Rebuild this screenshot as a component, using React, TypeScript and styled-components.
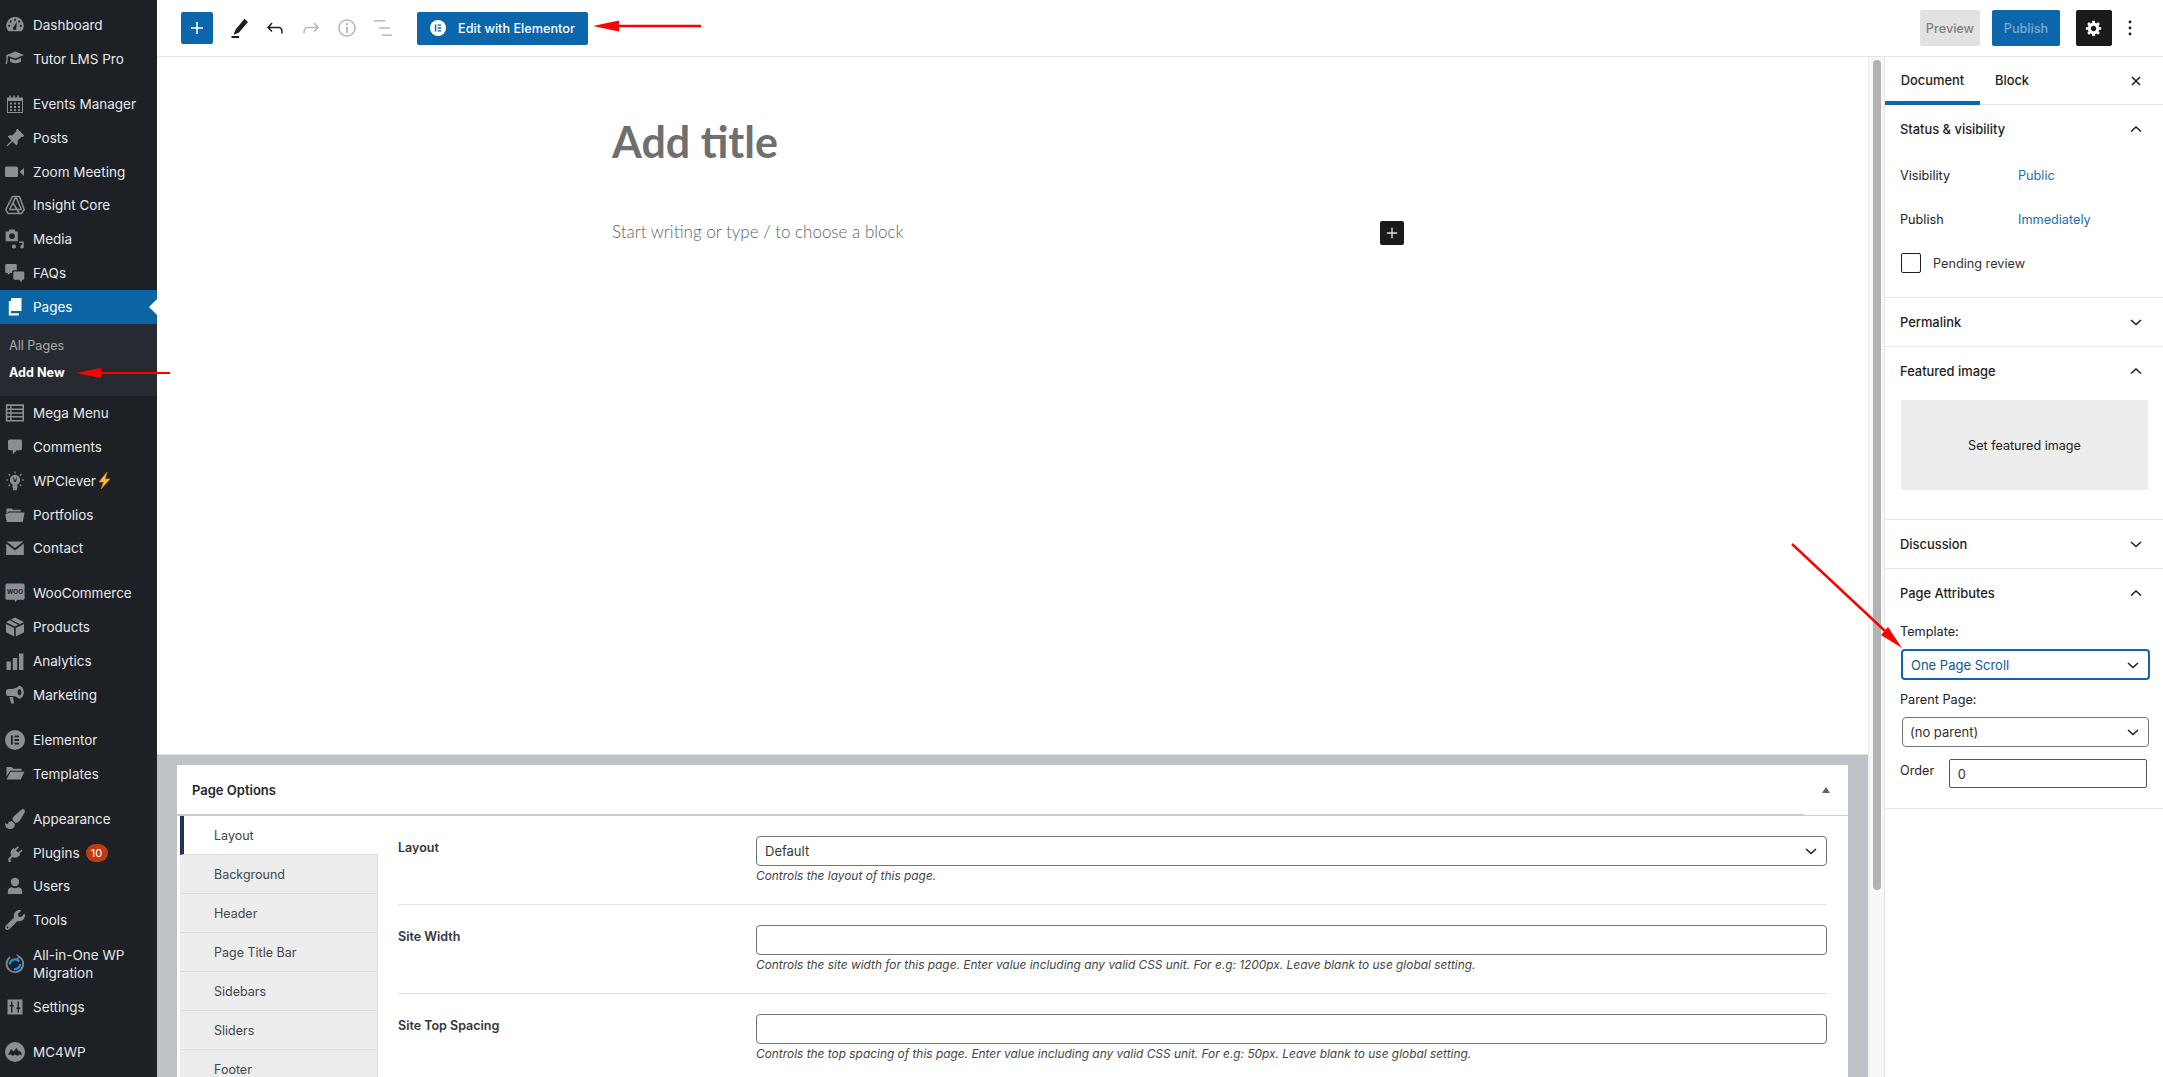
import React from 'react';
import styled, { createGlobalStyle } from 'styled-components';
import { BsPinAngleFill } from 'react-icons/bs';
import { FaPaintBrush, FaWrench } from 'react-icons/fa';

const GlobalStyle = createGlobalStyle`
  html, body {
    margin: 0;
    padding: 0;
    height: 100%;
    overflow: hidden;
    background: #fff;
    font-family: Inter, "Noto Sans", "Liberation Sans", sans-serif;
    color: #1e1e1e;
  }
  * { box-sizing: border-box; }
`;

const Page = styled.div`
  position: relative;
  display: grid;
  grid-template-columns: 157px 1fr;
  width: 2163px;
  height: 1077px;
  overflow: hidden;
`;

/* ---------- admin menu ---------- */

const AdminMenu = styled.nav`
  background: #1d2025;
  padding-top: 8px;
  height: 1077px;
  overflow: hidden;
`;

const MenuRow = styled.div<{ $active?: boolean; $tall?: boolean }>`
  position: relative;
  display: flex;
  align-items: center;
  height: ${p => (p.$tall ? '52.5px' : '33.9px')};
  padding-left: 5px;
  gap: 8px;
  font-size: 13.5px;
  line-height: 18px;
  color: ${p => (p.$active ? '#fff' : '#e8e9ea')};
  background: ${p => (p.$active ? '#0b64a3' : 'transparent')};

  ${p =>
    p.$active &&
    `&::after {
      content: '';
      position: absolute;
      right: 0;
      top: 50%;
      margin-top: -8px;
      border: 8px solid transparent;
      border-right-color: #fff;
      border-left-width: 0;
    }`}
`;

const MenuIcon = styled.span<{ $active?: boolean }>`
  flex: 0 0 20px;
  width: 20px;
  height: 20px;
  display: flex;
  align-items: center;
  justify-content: center;
  color: ${p => (p.$active ? '#fff' : '#8b8e92')};

  svg { width: 20px; height: 20px; display: block; }
`;

const MenuGap = styled.div`
  height: 11px;
`;

const SubMenu = styled.div`
  background: #272b31;
  padding: 8.4px 0 9.5px 9px;
`;

const SubItem = styled.div<{ $current?: boolean }>`
  height: 27px;
  line-height: 27px;
  font-size: 12.6px;
  font-weight: ${p => (p.$current ? 700 : 400)};
  color: ${p => (p.$current ? '#fff' : '#a9abae')};
`;

const Badge = styled.span`
  display: inline-flex;
  align-items: center;
  justify-content: center;
  width: 22px;
  height: 18px;
  margin-left: 6px;
  border-radius: 9px;
  background: #c23a14;
  color: #fff;
  font-size: 11px;
  vertical-align: 1px;
`;

const Bolt = styled.svg`
  width: 15px;
  height: 17px;
  margin-left: 1px;
  vertical-align: -3px;
`;

/* ---------- editor frame ---------- */

const Main = styled.div`
  display: flex;
  flex-direction: column;
  min-width: 0;
  height: 1077px;
`;

const TopBar = styled.header`
  flex: 0 0 57px;
  display: flex;
  align-items: center;
  padding: 0 21px 0 24px;
  border-bottom: 1px solid #e4e5e7;
  background: #fff;
`;

const PlusButton = styled.div`
  width: 32px;
  height: 32px;
  border-radius: 2px;
  background: #0b66ab;
  color: #fff;
  display: flex;
  align-items: center;
  justify-content: center;
  margin-right: 8px;
`;

const ToolSlot = styled.div<{ $muted?: boolean }>`
  width: 36px;
  height: 36px;
  display: flex;
  align-items: center;
  justify-content: center;
  color: ${p => (p.$muted ? '#b9b9b9' : '#1e1e1e')};
`;

const ElementorButton = styled.div`
  display: flex;
  align-items: center;
  width: 171px;
  height: 33px;
  margin-left: 16px;
  padding-left: 13px;
  gap: 12px;
  border-radius: 2px;
  background: #0b66ab;
  color: #fff;
  font-size: 12.7px;
  font-weight: 500;
  white-space: nowrap;
`;

const TopSpacer = styled.div`
  flex: 1;
`;

const PreviewButton = styled.div`
  width: 60px;
  height: 36px;
  display: flex;
  align-items: center;
  justify-content: center;
  border-radius: 2px;
  background: #e2e2e2;
  color: #7f7f7f;
  font-size: 12.7px;
  font-weight: 500;
`;

const PublishButton = styled(PreviewButton)`
  width: 68px;
  margin-left: 12px;
  background: #0b66ab;
  color: #7fa9cc;
`;

const SettingsButton = styled.div`
  width: 36px;
  height: 36px;
  margin-left: 16px;
  border-radius: 2px;
  background: #1a1a1a;
  color: #fff;
  display: flex;
  align-items: center;
  justify-content: center;
`;

const KebabButton = styled.div`
  width: 24px;
  margin-left: 6px;
  display: flex;
  justify-content: center;
`;

const Workspace = styled.div`
  flex: 1;
  display: flex;
  min-height: 0;
`;

const EditorColumn = styled.div`
  flex: 0 0 1711px;
  display: flex;
  flex-direction: column;
  overflow: hidden;
`;

const Canvas = styled.div`
  flex: 0 0 697px;
  padding: 61px 0 0 455px;
  background: #fff;
`;

const TitleText = styled.h1`
  margin: 0;
  font-family: Lato, Inter, sans-serif;
  font-size: 43px;
  line-height: 48px;
  font-weight: 700;
  color: #6f6f6f;
`;

const BlockRow = styled.div`
  display: flex;
  align-items: center;
  justify-content: space-between;
  width: 792px;
  height: 26px;
  margin-top: 54px;
`;

const Placeholder = styled.div`
  font-family: Lato, Inter, sans-serif;
  font-size: 17px;
  font-weight: 300;
  line-height: 24px;
  padding-bottom: 2px;
  color: #5f5f5f;
`;

const InlineInserter = styled.div`
  width: 24px;
  height: 24px;
  border-radius: 2px;
  background: #1a1a1a;
  color: #ddd;
  display: flex;
  align-items: center;
  justify-content: center;
`;

const ScrollTrack = styled.div`
  flex: 0 0 16px;
  padding: 3px 3px 0 4px;
  background: #f8f8f8;
  border-left: 1px solid #ececec;
  border-right: 1px solid #e4e5e7;
`;

const ScrollThumb = styled.div`
  width: 8px;
  height: 830px;
  border-radius: 4px;
  background: #b2b2b2;
`;

/* ---------- meta boxes ---------- */

const MetaArea = styled.div`
  flex: 1;
  padding: 10px 20px 0;
  background: #bfc3c7;
  border-top: 1px solid #dcdee0;
`;

const MetaBox = styled.section`
  background: #fff;
  height: 400px;
`;

const MetaHeader = styled.div`
  position: relative;
  display: flex;
  align-items: center;
  justify-content: space-between;
  height: 51px;
  padding: 0 18px 0 15px;
  border-bottom: 1px solid #ccd0d4;
  font-size: 13px;
  font-weight: 600;
  color: #23282d;

  &::after {
    content: '';
    position: absolute;
    left: 0;
    right: 44px;
    bottom: -1px;
    height: 2px;
    background: #c9cbce;
  }
`;

const CollapseCaret = styled.span`
  width: 0;
  height: 0;
  border-left: 4px solid transparent;
  border-right: 4px solid transparent;
  border-bottom: 6px solid #5f666d;
`;

const MetaBody = styled.div`
  display: flex;
  padding-left: 3px;
`;

const TabList = styled.div`
  flex: 0 0 198px;
`;

const MetaTab = styled.div<{ $active?: boolean }>`
  height: 39px;
  display: flex;
  align-items: center;
  padding: 0 0 0 ${p => (p.$active ? '30px' : '34px')};
  font-size: 12.5px;
  color: #40464d;
  background: ${p => (p.$active ? '#fff' : '#ededed')};
  border-bottom: 1px solid #dedede;
  border-right: ${p => (p.$active ? 'none' : '1px solid #dedede')};
  border-left: ${p => (p.$active ? '4px solid #24324f' : 'none')};
`;

const OptionList = styled.div`
  flex: 1;
  padding: 0 21px 0 20px;
`;

const OptionRow = styled.div`
  display: grid;
  grid-template-columns: 358px 1fr;
  height: 89px;
  padding-top: 20px;
  border-bottom: 1px solid #e2e2e2;
`;

const OptionLabel = styled.div`
  padding-top: 4px;
  font-size: 12.5px;
  line-height: 16px;
  font-weight: 600;
  color: #32373c;
`;

const FieldBox = styled.div`
  display: flex;
  align-items: center;
  justify-content: space-between;
  height: 30px;
  padding: 0 8px;
  border: 1px solid #6d7580;
  border-radius: 4px;
  background: #fff;
  font-size: 13px;
  color: #32373c;
`;

const HelpText = styled.p`
  margin: 2px 0 0;
  font-size: 11.9px;
  line-height: 15px;
  font-style: italic;
  color: #444;
`;

/* ---------- settings sidebar ---------- */

const SidePanel = styled.aside`
  flex: 1;
  min-width: 0;
  background: #fff;
  font-size: 12.7px;
  color: #1e1e1e;
`;

const PanelTabs = styled.div`
  display: flex;
  align-items: center;
  height: 48px;
  border-bottom: 1px solid #e4e5e7;
`;

const PanelTab = styled.div<{ $active?: boolean; $w: number }>`
  width: ${p => p.$w}px;
  height: 48px;
  line-height: 48px;
  text-align: center;
  font-weight: 500;
  font-size: 12.9px;
  border-bottom: ${p => (p.$active ? '4px solid #0b66ab' : 'none')};
`;

const PanelClose = styled.div`
  margin-left: auto;
  margin-right: 21px;
  display: flex;
`;

const PanelSection = styled.section`
  border-bottom: 1px solid #e4e5e7;
`;

const SectionHeader = styled.div`
  display: flex;
  align-items: center;
  justify-content: space-between;
  height: 48px;
  padding: 0 20px 0 15px;
  font-weight: 500;
  font-size: 12.9px;
`;

const StatusRow = styled.div`
  display: grid;
  grid-template-columns: 118px 1fr;
  align-items: center;
  height: 44px;
  padding: 0 15px;
`;

const LinkText = styled.span`
  color: #1a72b4;
`;

const PendingRow = styled.div`
  display: flex;
  align-items: center;
  gap: 12px;
  height: 44px;
  padding: 0 16px;
  margin-bottom: 12px;
  color: #333;
`;

const Checkbox = styled.span`
  width: 20px;
  height: 20px;
  border: 1px solid #1e1e1e;
  border-radius: 2px;
`;

const FeaturedBox = styled.div`
  display: flex;
  align-items: center;
  justify-content: center;
  height: 90px;
  margin: 5px 15px 29px 16px;
  background: #ededed;
  font-size: 12.6px;
  color: #222;
`;

const AttributesBody = styled.div`
  padding: 6px 16px 20px;
`;

const FieldLabel = styled.div`
  height: 18px;
  line-height: 18px;
  margin: 0 0 8px -1px;
  color: #222;
`;

const PanelSelect = styled.div<{ $focused?: boolean }>`
  display: flex;
  align-items: center;
  justify-content: space-between;
  height: ${p => (p.$focused ? '31px' : '30px')};
  margin: ${p => (p.$focused ? '0 -1px 11px 0' : '0 0 12px 1px')};
  width: ${p => (p.$focused ? '249px' : '247px')};
  padding: 0 8px 0 ${p => (p.$focused ? '8px' : '7px')};
  border: ${p => (p.$focused ? '2px solid #0b66ab' : '1px solid #757575')};
  border-radius: 4px;
  font-size: 13px;
  color: ${p => (p.$focused ? '#0b5a94' : '#333')};
`;

const OrderRow = styled.div`
  display: flex;
  align-items: flex-start;
`;

const OrderLabel = styled.label`
  width: 47px;
  margin-left: -1px;
  padding-top: 4px;
  margin-right: 2px;
`;

const OrderInput = styled.div`
  width: 199px;
  height: 29px;
  line-height: 29px;
  padding-left: 8px;
  border: 1px solid #555;
  border-radius: 2px;
  font-size: 12.8px;
  color: #333;
`;

/* ---------- screenshot annotations ---------- */

const Annotation = styled.svg<{ $x: number; $y: number }>`
  position: absolute;
  left: ${p => p.$x}px;
  top: ${p => p.$y}px;
  pointer-events: none;
`;

/* ---------- drawings ---------- */

const Chevron = ({ up }: { up?: boolean }) => (
  <svg width="14" height="14" viewBox="0 0 14 14" fill="none" stroke="#1e1e1e" strokeWidth="1.5">
    <path d={up ? 'M2 9.5 7 5l5 4.5' : 'M2 5l5 4.5L12 5'} />
  </svg>
);

const PlusGlyph = ({ size = 14 }: { size?: number }) => (
  <svg width={size} height={size} viewBox="0 0 14 14" fill="currentColor">
    <path d="M6.2 1h1.6v5.2H13v1.6H7.8V13H6.2V7.8H1V6.2h5.2z" />
  </svg>
);

const ElementorMark = ({ size, bar }: { size: number; bar: string }) => (
  <svg width={size} height={size} viewBox="0 0 20 20">
    <circle cx="10" cy="10" r="10" fill="currentColor" />
    <path fill={bar} d="M6 5.5h1.8v9H6zM9.500 5.500h4.500v1.800H9.500zM9.500 9.100h4.500v1.800H9.500zM9.500 12.700h4.500v1.800H9.500z" />
  </svg>
);

const bg = '#1d2025';

const icons: Record<string, React.ReactNode> = {
  dashboard: (
    <svg viewBox="0 0 20 20" fill="currentColor">
      <path d="M10 2a8.700 8.700 0 0 0-7.200 13.600c.3.400.6.600 1 .6h12.400c.4 0 .7-.2 1-.6A8.700 8.700 0 0 0 10 2z" />
      <g fill={bg}>
        <circle cx="10" cy="4.800" r="1.100" /><circle cx="5.800" cy="6.600" r="1.100" /><circle cx="14.200" cy="6.600" r="1.100" />
        <circle cx="4.200" cy="10.800" r="1.100" /><circle cx="15.800" cy="10.800" r="1.100" />
        <path d="M11.900 6.700 9 11.400a1.800 1.800 0 1 0 2.300 1z" />
      </g>
    </svg>
  ),
  tutor: (
    <svg viewBox="0 0 20 20" fill="currentColor">
      <path d="M1 6.200 10.500 2.600 19 6l-8.500 3.500-7.600-2.600v2L2 15H.6l.9-6.300z" />
      <path d="M5 9.200l5.500 2 5.500-2.200v3.400c-2.700 2.300-8 2.300-11 0z" />
    </svg>
  ),
  events: (
    <svg viewBox="0 0 20 20" fill="currentColor" fillRule="evenodd">
      <path d="M2 3.500h2.200V1.600h1.600v1.900h2.400V1.600h1.600v1.900h2.400V1.600h1.600v1.900H18V19H2zM3 7v11h14V7z" />
      <path d="M5 8.500h2v2H5zM9 8.500h2v2H9zM13 8.500h2v2h-2zM5 12h2v2H5zM9 12h2v2H9zM13 12h2v2h-2zM5 15.200h2v1.800H5zM9 15.200h2v1.800H9zM13 15.200h2v1.800h-2z" />
    </svg>
  ),
  zoom: (
    <svg viewBox="0 0 20 20" fill="currentColor">
      <rect x="0" y="4.500" width="13" height="10.500" rx="1.600" />
      <path d="M14.600 9.800 19 6v8z" />
    </svg>
  ),
  insight: (
    <svg viewBox="0 0 20 20" fill="none" stroke="currentColor" strokeWidth="1.500" strokeLinejoin="round">
      <path d="M7.500 1.500h7l4.700 13.200-2.800 3.800H3L.8 14.600z" />
      <path d="M10.800 1.800 4.600 14.600h12M8 8l6.200 10M11 2l5.300 12.500" />
    </svg>
  ),
  media: (
    <svg viewBox="0 0 20 20" fill="currentColor">
      <path fillRule="evenodd" d="M4.500 .6h5l1 1.800h2.300v9.800H.6V2.400h2.900zM7 4.200a2.900 2.900 0 1 0 0 5.800 2.900 2.900 0 0 0 0-5.800z" />
      <path d="M14 12.600h4.800v5.200a1.800 1.800 0 1 1-1.500-1.800v-1.900H14zM9 15.600a2 2 0 1 1-.1 4 2 2 0 0 1 .1-4z" />
    </svg>
  ),
  faq: (
    <svg viewBox="0 0 20 20" fill="currentColor">
      <path d="M1.500 1h9a1.300 1.300 0 0 1 1.300 1.300v5H8.600a1.600 1.600 0 0 0-1.600 1.600v1H5.200L2.800 12V10H1.500A1.300 1.300 0 0 1 .2 8.700V2.300A1.300 1.300 0 0 1 1.500 1z" />
      <path d="M9.600 8.400h8.400a1.300 1.300 0 0 1 1.300 1.300v5.800a1.300 1.300 0 0 1-1.300 1.300h-1.200v2.600L14 16.800H9.600a1.300 1.300 0 0 1-1.300-1.300V9.700a1.300 1.300 0 0 1 1.300-1.300z" />
    </svg>
  ),
  pages: (
    <svg viewBox="0 0 20 20" fill="currentColor">
      <path d="M6 1h10.500v13H6z" />
      <path d="M3.800 4v14.500h10v-2.200H6V4z" />
    </svg>
  ),
  mega: (
    <svg viewBox="0 0 20 20" fill="currentColor" fillRule="evenodd">
      <path d="M.8 1.200H19v17.400H.8zM2.400 3v2.400h2.800V3zM6.600 3v2.400h10.800V3zM2.400 7v2.200h2.800V7zM6.600 7v2.200h10.800V7zM2.400 10.800V13h2.800v-2.200zM6.600 10.800V13h10.800v-2.200zM2.400 14.600V17h2.800v-2.400zM6.600 14.600V17h10.800v-2.400z" />
    </svg>
  ),
  comments: (
    <svg viewBox="0 0 20 20" fill="currentColor">
      <path d="M4.800 2.500h10.400a1.800 1.800 0 0 1 1.800 1.800v7.200a1.800 1.800 0 0 1-1.800 1.800h-3.400l-4 4.200v-4.200h-3a1.800 1.800 0 0 1-1.800-1.800V4.300a1.800 1.800 0 0 1 1.800-1.800z" />
    </svg>
  ),
  clever: (
    <svg viewBox="0 0 20 20" fill="none" stroke="currentColor" strokeWidth="1.100">
      <circle cx="10" cy="9" r="4.600" fill="currentColor" />
      <path d="M8 14.800h4v1.400H8zM8.600 17.200h2.800v1.400H8.600z" fill="currentColor" />
      <path d="M10 .6v2M3.600 3l1.500 1.500M16.400 3l-1.500 1.500M1 9h2.200M17 9h2.200M3.600 15l1.500-1.500M16.400 15l-1.500-1.500" />
      <path d="M8.400 6.500 9.500 11 10 8.500l.6 2.500 1-4.500" stroke={bg} strokeWidth=".8" />
    </svg>
  ),
  portfolio: (
    <svg viewBox="0 0 20 20" fill="currentColor" fillRule="evenodd">
      <path d="M1.500 3.400h5.200l1 1.400h8v1.600H3.700L1.400 9z" />
      <path d="M4.200 7.400h15.400L17.800 17H1.800L.2 9.800z" />
    </svg>
  ),
  contact: (
    <svg viewBox="0 0 20 20" fill="currentColor">
      <path d="M1.500 3.400h17L10 10z" />
      <path d="M1.200 5.600 10 12.400l8.800-6.800V17H1.200z" />
    </svg>
  ),
  woo: (
    <svg viewBox="0 0 20 20">
      <path fill="currentColor" d="M2 .6h16a1.600 1.600 0 0 1 1.600 1.600v13a1.600 1.600 0 0 1-1.600 1.600h-6l-1.600 2.400-.8-2.400H2A1.600 1.600 0 0 1 .4 15.200v-13A1.600 1.600 0 0 1 2 .6z" />
      <text x="10" y="11" textAnchor="middle" fontFamily="Inter, sans-serif" fontSize="6.200" fontWeight="700" fill={bg}>WOO</text>
    </svg>
  ),
  products: (
    <svg viewBox="0 0 20 20" fill="currentColor">
      <path d="M10 .6 18.800 5v.3l-8.800 4.200L1.200 5.300V5z" />
      <path d="M1 7l8.200 4v8.400L1 15.300zM19 7v8.300l-8.200 4.100V11z" />
      <path d="M5.400 3 14 7.400" stroke={bg} strokeWidth="1.200" />
    </svg>
  ),
  analytics: (
    <svg viewBox="0 0 20 20" fill="currentColor">
      <path d="M2.500 10.500h4.400V19H2.500zM8.800 7h4.400v12H8.800zM15 2.500h4.400V19H15z" transform="translate(-1 0)" />
    </svg>
  ),
  marketing: (
    <svg viewBox="0 0 20 20" fill="currentColor" fillRule="evenodd">
      <path d="M14 .8c2.800 0 4.800 3 4.800 6.500s-2 6.500-4.800 6.500c-1.500-1.600-4-2.600-7-2.800H3.500A2.500 2.500 0 0 1 1 8.500V6.500A2.500 2.500 0 0 1 3.500 4H7c3-.2 5.500-1.500 7-3.200zM14.500 4c-1 0-1.800 1.500-1.800 3.300s.8 3.300 1.800 3.300 1.800-1.500 1.800-3.300S15.500 4 14.500 4z" />
      <path d="M4.400 12h3.400l1.400 6.600H6.200z" />
    </svg>
  ),
  elementor: <ElementorMark size={20} bar={bg} />,
  templates: (
    <svg viewBox="0 0 20 20" fill="currentColor">
      <path d="M1.500 3h5.200l1.400 1.800h8.400v1.900H5L1.500 12.500z" />
      <path d="M5.600 7.800h13.900L15.700 15.600H1.500z" />
    </svg>
  ),
  plugins: (
    <svg viewBox="0 0 20 20" fill="currentColor">
      <path d="M12.800 3.200 14 4.400l-3 3 2.200 2.200 3-3 1.200 1.200-3 3 .9.900-1.300 1.300c-1.900 1.900-4.400 2.100-6.300.9L5.500 16.200 6 19H3.600l-.4-3.200 3-3.200c-1.100-1.900-.9-4.400 1-6.300l1.300-1.300.9.900z" />
    </svg>
  ),
  users: (
    <svg viewBox="0 0 20 20" fill="currentColor">
      <circle cx="10" cy="6" r="4.200" />
      <path d="M2.800 18v-2.800c0-2.600 2.200-4 4.200-4 1 .8 2 1.100 3 1.100s2-.3 3-1.100c2 0 4.200 1.400 4.200 4V18z" />
    </svg>
  ),
  aio: (
    <svg viewBox="0 0 20 20" fill="none">
      <path d="M5 3.200A8.300 8.300 0 1 0 13.800 2.600" stroke="#82868a" strokeWidth="1.800" />
      <path d="M11.500 .8 14.500 2.800 12 5" stroke="#82868a" strokeWidth="1.300" />
      <path d="M4.800 10.500a5.200 5.200 0 0 1 9.400-3M15.200 10a5.200 5.200 0 0 1-6.200 5" stroke="#2094e0" strokeWidth="2.200" />
    </svg>
  ),
  settings: (
    <svg viewBox="0 0 20 20" fill="currentColor" fillRule="evenodd">
      <path d="M2.500 2.500h15v15h-15zM6 4.500V8H4.700v1.600H6v6h1.400v-6h1.300V8H7.400V4.500zM12.600 4.500v6H11.300v1.600h1.300v3.500H14v-3.500h1.300v-1.600H14v-6z" />
    </svg>
  ),
  mc4wp: (
    <svg viewBox="0 0 20 20">
      <circle cx="10" cy="10" r="10" fill="currentColor" />
      <path fill={bg} d="M3 13 6 7l2.500 2.500L11.500 6l1.500 2.500 3 1.500 1 3.500-3-1-1 1.500-3-1.500-2 1.500-2-1.500z" />
    </svg>
  ),
};

type Item = { label: string; icon: string | React.ReactNode; extra?: React.ReactNode; tall?: boolean };

const BoltMark = () => (
  <Bolt viewBox="0 0 15 17">
    <path d="M10 0 2 10h4.500L4 17l9-10H8.200z" fill="#f7c32e" stroke="#d9781c" strokeWidth=".7" />
  </Bolt>
);

const groupOne: Item[] = [
  { label: 'Dashboard', icon: 'dashboard' },
  { label: 'Tutor LMS Pro', icon: 'tutor' },
];

const groupTwo: Item[] = [
  { label: 'Events Manager', icon: 'events' },
  { label: 'Posts', icon: <BsPinAngleFill /> },
  { label: 'Zoom Meeting', icon: 'zoom' },
  { label: 'Insight Core', icon: 'insight' },
  { label: 'Media', icon: 'media' },
  { label: 'FAQs', icon: 'faq' },
];

const groupThree: Item[] = [
  { label: 'Mega Menu', icon: 'mega' },
  { label: 'Comments', icon: 'comments' },
  { label: 'WPClever', icon: 'clever', extra: <BoltMark /> },
  { label: 'Portfolios', icon: 'portfolio' },
  { label: 'Contact', icon: 'contact' },
];

const groupFour: Item[] = [
  { label: 'WooCommerce', icon: 'woo' },
  { label: 'Products', icon: 'products' },
  { label: 'Analytics', icon: 'analytics' },
  { label: 'Marketing', icon: 'marketing' },
];

const groupFive: Item[] = [
  { label: 'Elementor', icon: 'elementor' },
  { label: 'Templates', icon: 'templates' },
];

const groupSix: Item[] = [
  { label: 'Appearance', icon: <FaPaintBrush /> },
  { label: 'Plugins', icon: 'plugins', extra: <Badge>10</Badge> },
  { label: 'Users', icon: 'users' },
  { label: 'Tools', icon: <FaWrench /> },
  { label: 'All-in-One WP Migration', icon: 'aio', tall: true },
  { label: 'Settings', icon: 'settings' },
];

const MenuGroup = ({ items }: { items: Item[] }) => (
  <>
    {items.map(item => (
      <MenuRow key={item.label} $tall={item.tall}>
        <MenuIcon>{typeof item.icon === 'string' ? icons[item.icon] : item.icon}</MenuIcon>
        <span>
          {item.label}
          {item.extra}
        </span>
      </MenuRow>
    ))}
  </>
);

const metaTabs = ['Background', 'Header', 'Page Title Bar', 'Sidebars', 'Sliders', 'Footer'];

export default function App() {
  return (
    <Page>
      <GlobalStyle />
      <AdminMenu>
        <MenuGroup items={groupOne} />
        <MenuGap />
        <MenuGroup items={groupTwo} />
        <MenuRow $active>
          <MenuIcon $active>{icons.pages}</MenuIcon>
          <span>Pages</span>
        </MenuRow>
        <SubMenu>
          <SubItem>All Pages</SubItem>
          <SubItem $current>Add New</SubItem>
        </SubMenu>
        <MenuGroup items={groupThree} />
        <MenuGap />
        <MenuGroup items={groupFour} />
        <MenuGap />
        <MenuGroup items={groupFive} />
        <MenuGap />
        <MenuGroup items={groupSix} />
        <MenuGap />
        <MenuGroup items={[{ label: 'MC4WP', icon: 'mc4wp' }]} />
      </AdminMenu>

      <Main>
        <TopBar>
          <PlusButton><PlusGlyph /></PlusButton>
          <ToolSlot>
            <svg width="24" height="24" viewBox="0 0 24 24" fill="currentColor">
              <path d="M17.600 2.800 21 6 12 16.400 7.400 18.600 6.800 18 8.800 13.200z" />
              <path d="M4.500 20h7.500v2H4.500z" />
            </svg>
          </ToolSlot>
          <ToolSlot>
            <svg width="24" height="24" viewBox="0 0 24 24" fill="currentColor">
              <path d="M18.300 11.700c-.6-.6-1.400-.9-2.300-.9H6.700l2.900-3.300-1.100-1-4.500 5L8.500 16l1-1-2.700-2.700H16c.5 0 .9.2 1.300.5 1 1 1 3.400 1 4.500v.3h1.500v-.2c0-1.500 0-4.300-1.500-5.700z" />
            </svg>
          </ToolSlot>
          <ToolSlot $muted>
            <svg width="24" height="24" viewBox="0 0 24 24" fill="currentColor">
              <path d="M15.600 6.500l-1.100 1 2.900 3.300H8c-.9 0-1.700.3-2.300.9-1.400 1.500-1.400 4.200-1.400 5.600v.2h1.500v-.3c0-1.100 0-3.500 1-4.500.3-.3.7-.5 1.300-.5h9.200L14.500 15l1.100 1.100 4.600-4.600-4.600-5z" />
            </svg>
          </ToolSlot>
          <ToolSlot $muted>
            <svg width="24" height="24" viewBox="0 0 24 24" fill="currentColor">
              <path d="M12 3.200c-4.800 0-8.800 3.900-8.800 8.800 0 4.800 3.900 8.800 8.800 8.800 4.800 0 8.800-3.900 8.800-8.800 0-4.800-4-8.800-8.800-8.800zm0 16c-4 0-7.200-3.300-7.200-7.200C4.800 8 8 4.800 12 4.800s7.200 3.300 7.200 7.200c0 4-3.200 7.200-7.200 7.200zM11 17h2v-6h-2v6zm0-8h2V7h-2v2z" />
            </svg>
          </ToolSlot>
          <ToolSlot $muted>
            <svg width="24" height="24" viewBox="0 0 24 24" fill="currentColor">
              <path d="M3 4h11.500v1.500H3zM8 11.200h11v1.500H8zM11 18.500h10V20H11z" />
            </svg>
          </ToolSlot>
          <ElementorButton>
            <ElementorMark size={16} bar="#0b66ab" />
            <span>Edit with Elementor</span>
          </ElementorButton>
          <TopSpacer />
          <PreviewButton>Preview</PreviewButton>
          <PublishButton>Publish</PublishButton>
          <SettingsButton>
            <svg width="18" height="18" viewBox="0 0 20 20" fill="currentColor">
              <path d="M18 12h-2.180c-.17.7-.44 1.350-.81 1.930l1.540 1.540-2.100 2.100-1.540-1.540c-.58.36-1.230.63-1.910.79V19H8v-2.180c-.68-.16-1.330-.43-1.910-.79l-1.540 1.540-2.120-2.120 1.540-1.540c-.36-.58-.63-1.230-.79-1.910H1V9.030h2.170c.16-.7.44-1.350.8-1.940L2.430 5.550l2.100-2.100 1.540 1.540c.58-.37 1.240-.64 1.930-.81V2h3v2.180c.68.16 1.330.43 1.910.79l1.540-1.540 2.120 2.120-1.540 1.540c.36.59.64 1.240.8 1.940H18V12zm-8.500 1.500c1.660 0 3-1.340 3-3s-1.340-3-3-3-3 1.340-3 3 1.340 3 3 3z" />
            </svg>
          </SettingsButton>
          <KebabButton>
            <svg width="4" height="16" viewBox="0 0 4 16" fill="#1e1e1e">
              <circle cx="2" cy="2" r="1.400" /><circle cx="2" cy="8" r="1.400" /><circle cx="2" cy="14" r="1.400" />
            </svg>
          </KebabButton>
        </TopBar>

        <Workspace>
          <EditorColumn>
            <Canvas>
              <TitleText>Add title</TitleText>
              <BlockRow>
                <Placeholder>Start writing or type / to choose a block</Placeholder>
                <InlineInserter><PlusGlyph size={12} /></InlineInserter>
              </BlockRow>
            </Canvas>
            <MetaArea>
              <MetaBox>
                <MetaHeader>
                  <span>Page Options</span>
                  <CollapseCaret />
                </MetaHeader>
                <MetaBody>
                  <TabList>
                    <MetaTab $active>Layout</MetaTab>
                    {metaTabs.map(t => <MetaTab key={t}>{t}</MetaTab>)}
                  </TabList>
                  <OptionList>
                    <OptionRow>
                      <OptionLabel>Layout</OptionLabel>
                      <div>
                        <FieldBox>Default <Chevron /></FieldBox>
                        <HelpText>Controls the layout of this page.</HelpText>
                      </div>
                    </OptionRow>
                    <OptionRow>
                      <OptionLabel>Site Width</OptionLabel>
                      <div>
                        <FieldBox />
                        <HelpText>Controls the site width for this page. Enter value including any valid CSS unit. For e.g: 1200px. Leave blank to use global setting.</HelpText>
                      </div>
                    </OptionRow>
                    <OptionRow>
                      <OptionLabel>Site Top Spacing</OptionLabel>
                      <div>
                        <FieldBox />
                        <HelpText>Controls the top spacing of this page. Enter value including any valid CSS unit. For e.g: 50px. Leave blank to use global setting.</HelpText>
                      </div>
                    </OptionRow>
                  </OptionList>
                </MetaBody>
              </MetaBox>
            </MetaArea>
          </EditorColumn>

          <ScrollTrack><ScrollThumb /></ScrollTrack>

          <SidePanel>
            <PanelTabs>
              <PanelTab $active $w={95}>Document</PanelTab>
              <PanelTab $w={64}>Block</PanelTab>
              <PanelClose>
                <svg width="12" height="12" viewBox="0 0 12 12" stroke="#1e1e1e" strokeWidth="1.500">
                  <path d="M2 2l8 8M10 2l-8 8" />
                </svg>
              </PanelClose>
            </PanelTabs>

            <PanelSection>
              <SectionHeader>Status &amp; visibility <Chevron up /></SectionHeader>
              <StatusRow><span>Visibility</span><LinkText>Public</LinkText></StatusRow>
              <StatusRow><span>Publish</span><LinkText>Immediately</LinkText></StatusRow>
              <PendingRow><Checkbox />Pending review</PendingRow>
            </PanelSection>

            <PanelSection>
              <SectionHeader>Permalink <Chevron /></SectionHeader>
            </PanelSection>

            <PanelSection>
              <SectionHeader>Featured image <Chevron up /></SectionHeader>
              <FeaturedBox>Set featured image</FeaturedBox>
            </PanelSection>

            <PanelSection>
              <SectionHeader>Discussion <Chevron /></SectionHeader>
            </PanelSection>

            <PanelSection>
              <SectionHeader>Page Attributes <Chevron up /></SectionHeader>
              <AttributesBody>
                <FieldLabel>Template:</FieldLabel>
                <PanelSelect $focused>One Page Scroll <Chevron /></PanelSelect>
                <FieldLabel>Parent Page:</FieldLabel>
                <PanelSelect>(no parent) <Chevron /></PanelSelect>
                <OrderRow>
                  <OrderLabel>Order</OrderLabel>
                  <OrderInput>0</OrderInput>
                </OrderRow>
              </AttributesBody>
            </PanelSection>
          </SidePanel>
        </Workspace>
      </Main>

      <Annotation $x={593} $y={18} width="110" height="16" viewBox="0 0 110 16">
        <path d="M0 8 26 2.500V6.800H108V9.200H26V13.500z" fill="#f00" />
      </Annotation>
      <Annotation $x={76} $y={365} width="96" height="16" viewBox="0 0 96 16">
        <path d="M0 8 25 3V6.900H94V9.100H25V13z" fill="#f00" />
      </Annotation>
      <Annotation $x={1790} $y={542} width="114" height="110" viewBox="0 0 114 110">
        <path d="M2 2 95 89" stroke="#f00" strokeWidth="2.400" fill="none" />
        <path d="M112 106 91 93 98 85z" fill="#f00" />
      </Annotation>
    </Page>
  );
}
